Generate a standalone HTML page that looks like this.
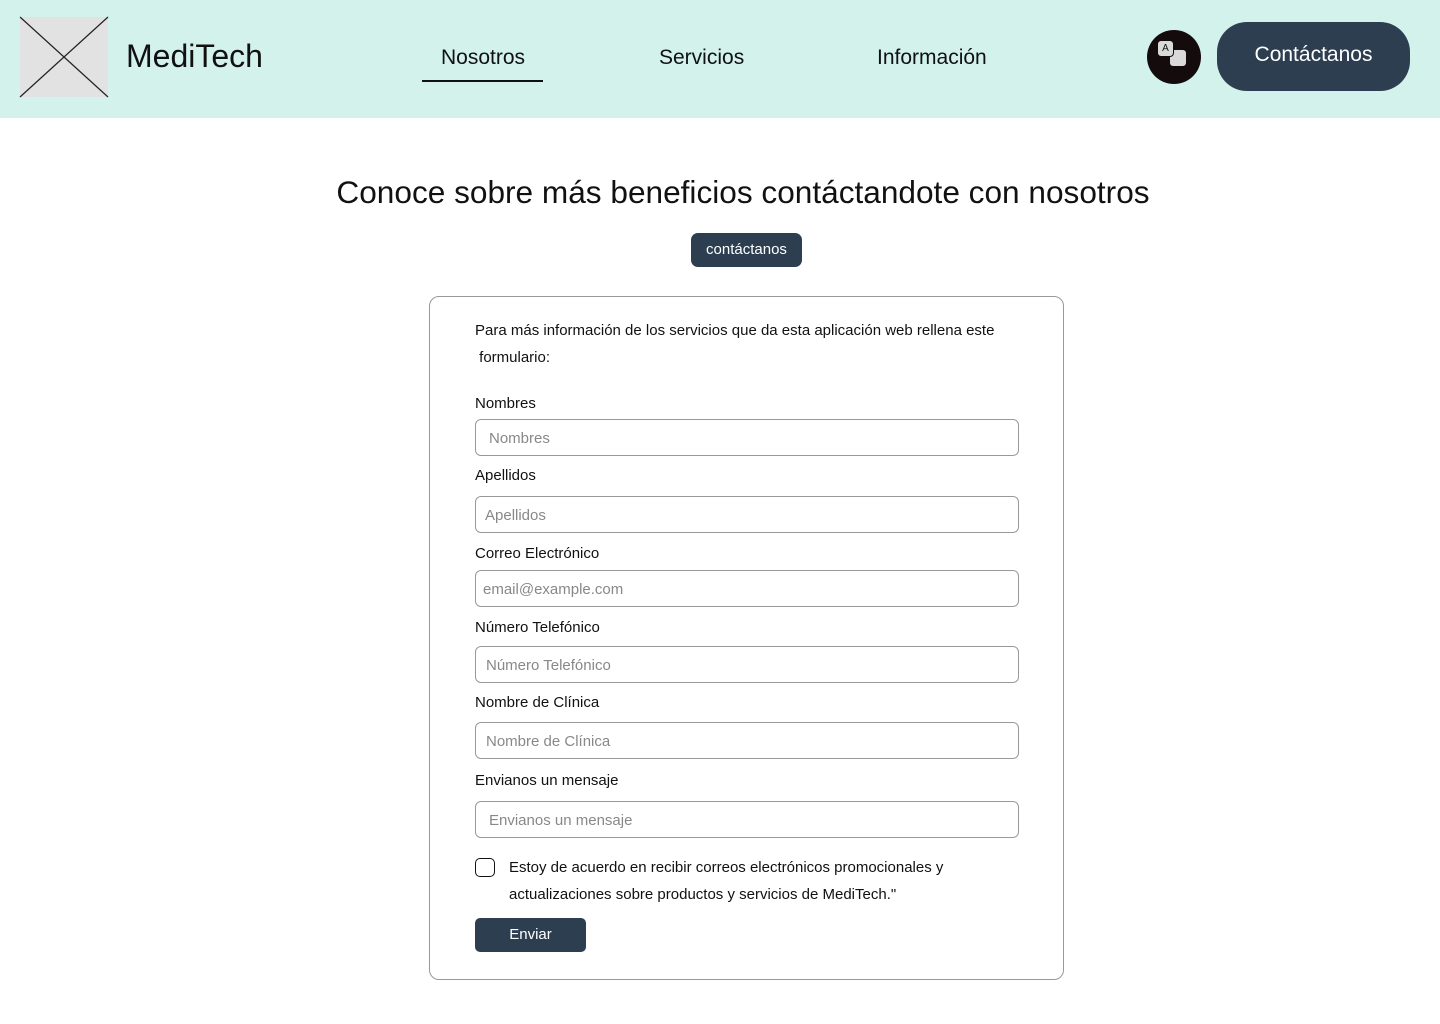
<!DOCTYPE html>
<html><head><meta charset="utf-8"><style>
*{margin:0;padding:0;box-sizing:border-box}
body{width:1440px;height:1024px;background:#fff;font-family:"Liberation Sans",sans-serif;color:#111;position:relative;overflow:hidden}
.a{position:absolute}
header{position:absolute;left:0;top:0;width:1440px;height:118px;background:#d2f2eb}
.nav{font-size:21px;color:#111}
.lbl{position:absolute;left:475px;font-size:15px;color:#111}
.inp{position:absolute;left:475px;width:544px;height:37px;border:1px solid #999;border-radius:6px;font-size:15px;color:#888;padding-top:10px}
.btn{background:#2c3e50;color:#fff;text-align:center}
</style></head><body>
<header>
<svg class="a" style="left:19px;top:16px" width="90" height="82"><rect x="1" y="1" width="88" height="80" fill="#e2e2e2"/><line x1="1" y1="1" x2="89" y2="81" stroke="#222" stroke-width="1.2"/><line x1="89" y1="1" x2="1" y2="81" stroke="#222" stroke-width="1.2"/></svg>
<div class="a" style="left:126px;top:38px;font-size:32px;color:#111">MediTech</div>
<div class="a nav" style="left:441px;top:46px">Nosotros</div>
<div class="a" style="left:422px;top:80px;width:121px;height:2px;background:#111"></div>
<div class="a nav" style="left:659px;top:46px">Servicios</div>
<div class="a nav" style="left:877px;top:46px">Información</div>
<div class="a" style="left:1147px;top:30px;width:54px;height:54px;border-radius:50%;background:#140c0c"></div>
<div class="a" style="left:1169px;top:49px;width:18px;height:18px;border-radius:4px;background:#d9d9d9;border:1px solid #140c0c"></div>
<div class="a" style="left:1157px;top:40px;width:17px;height:17px;border-radius:4px;background:#d9d9d9;border:1px solid #140c0c;font-size:10px;text-align:center;line-height:15px">A</div>
<div class="a btn" style="left:1217px;top:22px;width:193px;height:69px;border-radius:30px;font-size:21px;line-height:66px">Contáctanos</div>
</header>
<div class="a" style="left:0;width:1440px;top:174px;text-align:center;font-size:31.6px;color:#111;padding-left:46px">Conoce sobre más beneficios contáctandote con nosotros</div>
<div class="a btn" style="left:691px;top:233px;width:111px;height:34px;border-radius:7px;font-size:15px;line-height:33px">contáctanos</div>
<div class="a" style="left:429px;top:296px;width:635px;height:684px;border:1px solid #999;border-radius:10px"></div>
<div class="a" style="left:475px;top:317px;font-size:15px;line-height:27px;width:560px">Para más información de los servicios que da esta aplicación web rellena este<br>&nbsp;formulario:</div>
<div class="lbl" style="top:395px">Nombres</div>
<div class="inp" style="top:419px;padding-left:13px">Nombres</div>
<div class="lbl" style="top:467px">Apellidos</div>
<div class="inp" style="top:496px;padding-left:9px">Apellidos</div>
<div class="lbl" style="top:545px">Correo Electrónico</div>
<div class="inp" style="top:570px;padding-left:7px">email@example.com</div>
<div class="lbl" style="top:619px">Número Telefónico</div>
<div class="inp" style="top:646px;padding-left:10px">Número Telefónico</div>
<div class="lbl" style="top:694px">Nombre de Clínica</div>
<div class="inp" style="top:722px;padding-left:10px">Nombre de Clínica</div>
<div class="lbl" style="top:772px">Envianos un mensaje</div>
<div class="inp" style="top:801px;padding-left:13px">Envianos un mensaje</div>
<div class="a" style="left:475px;top:858px;width:20px;height:19px;border:1.5px solid #111;border-radius:5px"></div>
<div class="a" style="left:509px;top:854px;font-size:15px;line-height:27px">Estoy de acuerdo en recibir correos electrónicos promocionales y<br>actualizaciones sobre productos y servicios de MediTech."</div>
<div class="a btn" style="left:475px;top:918px;width:111px;height:34px;border-radius:5px;font-size:15px;line-height:33px">Enviar</div>
</body></html>
